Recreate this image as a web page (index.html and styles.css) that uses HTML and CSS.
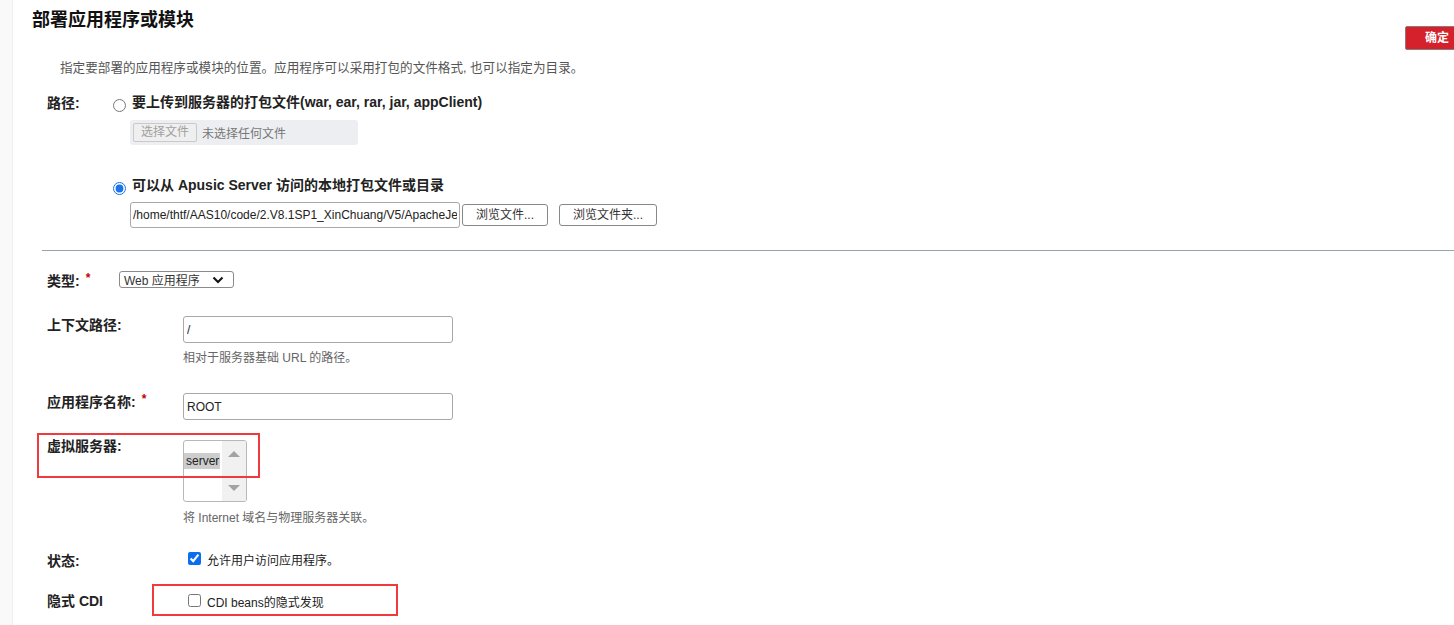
FILE: index.html
```html
<!DOCTYPE html>
<html lang="zh-CN">
<head>
    <title>部署应用程序或模块</title>
    <meta charset="UTF-8">
    <meta name="viewport" content="width=device-width, initial-scale=1.0">
    <link rel="stylesheet" href="styles.css">
</head>
<body>
    <div class="sidebar"></div>
    <div class="main">
        <div class="header">
            <h1 class="titre">部署应用程序或模块</h1>
            <div class="bouton-ok">确定</div>
        </div>
        <p class="desc">指定要部署的应用程序或模块的位置。应用程序可以采用打包的文件格式, 也可以指定为目录。</p>

        <!-- choix du chemin -->
        <div class="chemin">
            <div class="label">路径:</div>
            <div class="choix">
                <label class="radio"><input type="radio" name="src">要上传到服务器的打包文件(war, ear, rar, jar, appClient)</label>
                <div class="fichier">
                    <span class="fichier-btn">选择文件</span>
                    <span class="fichier-nom">未选择任何文件</span>
                </div>
                <label class="radio radio-2"><input type="radio" name="src" checked>可以从 Apusic Server 访问的本地打包文件或目录</label>
                <div class="ligne-path">
                    <input class="path" type="text" value="/home/thtf/AAS10/code/2.V8.1SP1_XinChuang/V5/ApacheJetspeed">
                    <span class="btn">浏览文件...</span>
                    <span class="btn btn-dossier">浏览文件夹...</span>
                </div>
            </div>
        </div>

        <hr class="sep">

        <div class="row row-type">
            <div class="label label-court">类型:<span class="req">*</span></div>
            <div class="select">Web 应用程序
                <svg class="chevron" width="12" height="8" viewBox="0 0 12 8"><polyline points="1.5,1.5 6,6 10.5,1.5" fill="none" stroke="#111" stroke-width="2"/></svg>
            </div>
        </div>

        <div class="row row-ctx">
            <div class="label">上下文路径:</div>
            <div>
                <input class="champ" type="text" value="/">
                <div class="aide">相对于服务器基础 URL 的路径。</div>
            </div>
        </div>

        <div class="row row-nom">
            <div class="label label-haut">应用程序名称:<span class="req">*</span></div>
            <input class="champ" type="text" value="ROOT">
        </div>

        <div class="row row-vs">
            <div class="label label-haut">虚拟服务器:</div>
            <div>
                <div class="listbox">
                    <div class="options"><div class="opt">server</div></div>
                    <div class="scroll">
                        <span class="fleche-haut"></span>
                        <span class="fleche-bas"></span>
                    </div>
                </div>
                <div class="aide aide-vs">将 Internet 域名与物理服务器关联。</div>
            </div>
        </div>

        <div class="row row-etat">
            <div class="label">状态:</div>
            <label class="check"><input type="checkbox" checked>允许用户访问应用程序。</label>
        </div>

        <div class="row row-cdi">
            <div class="label label-cdi">隐式 CDI</div>
            <label class="check"><input type="checkbox">CDI beans的隐式发现</label>
        </div>
    </div>

    <!-- cadres rouges d'annotation -->
    <div class="cadre cadre-vs"></div>
    <div class="cadre cadre-cdi"></div>
</body>
</html>
```

FILE: styles.css
```css
body {
    margin: 0;
    display: flex;
    min-height: 625px;
    overflow: hidden;
    font-family: "Liberation Sans", Arial, "Noto Sans CJK SC", sans-serif;
    color: #222;
    background: #fff;
}

.sidebar {
    width: 12px;
    background-color: #f9f9f9;
    border-right: 1px solid #efefef;
}
.main {
    flex: 1;
    padding-left: 19px;
}

/****** EN-TETE ******/
.header {
    display: flex;
    justify-content: space-between;
    align-items: flex-start;
}
.titre {
    margin: 8px 0 0 0;
    font-size: 18px;
    line-height: 24px;
    font-weight: 700;
    color: #111;
}
.bouton-ok {
    margin-top: 26px;
    margin-right: -12px;
    height: 22px;
    line-height: 22px;
    padding: 0 16px 0 19px;
    background-color: #d4212b;
    border: 1px solid #8a7a7a;
    border-radius: 2px;
    color: #fff;
    font-size: 12px;
    font-weight: 700;
}
.desc {
    margin: 10px 0 0 28px;
    font-size: 12.6px;
    line-height: 16px;
    color: #555;
}

/****** CHEMIN ******/
.chemin {
    display: grid;
    grid-template-columns: 66px auto;
    margin: 16px 0 0 15px;
}
.label {
    font-size: 14px;
    font-weight: 700;
    line-height: 18px;
    color: #222;
}
.chemin > .label {
    padding-top: 2px;
}
.radio {
    display: flex;
    align-items: center;
    font-size: 14px;
    font-weight: 700;
    line-height: 20px;
}
.radio input {
    width: 13px;
    height: 13px;
    margin: 7px 6px 0 0;
    accent-color: #1a73e8;
}
.radio-2 {
    margin-top: 29px;
}
.radio-2 input {
    margin-top: 8px;
}
.fichier {
    display: flex;
    align-items: center;
    width: 222px;
    height: 25px;
    margin: 8px 0 0 17px;
    padding: 0 3px;
    background-color: #eceef1;
    border-radius: 3px;
    font-size: 12px;
}
.fichier-btn {
    height: 17px;
    line-height: 17px;
    padding: 0 7px;
    border: 1px solid #c9c9c9;
    border-radius: 2px;
    background-color: #efefef;
    color: #a0a0a0;
}
.fichier-nom {
    margin-left: 5px;
    color: #777;
}
.ligne-path {
    display: flex;
    align-items: center;
    margin: 7px 0 0 17px;
}
.path {
    box-sizing: border-box;
    width: 330px;
    height: 26px;
    padding: 0 2px;
    border: 1px solid #a8a8a8;
    border-radius: 3px;
    font-family: inherit;
    font-size: 12px;
    color: #222;
}
.btn {
    box-sizing: border-box;
    height: 22px;
    line-height: 20px;
    margin-left: 2px;
    padding: 0 13px;
    border: 1px solid #888;
    border-radius: 3px;
    font-size: 12px;
    color: #333;
    background-color: #fff;
}
.btn-dossier {
    margin-left: 11px;
}

.sep {
    margin: 22px 0 0 10px;
    border: none;
    border-top: 1px solid #94a4ac;
}

/****** FORMULAIRE ******/
.row {
    display: flex;
    align-items: flex-start;
    margin-left: 15px;
}
.row > .label {
    width: 136px;
    flex-shrink: 0;
}
.row > .label-court {
    width: 72px;
}
.label-haut {
    margin-top: -3px;
}
.label-cdi {
    margin-top: -2px;
}
.req {
    color: #c40000;
    font-size: 12px;
    vertical-align: 4px;
    margin-left: 6px;
}
.row-type {
    margin-top: 18px;
    align-items: center;
}
.select {
    display: flex;
    align-items: center;
    box-sizing: border-box;
    width: 115px;
    height: 17px;
    padding: 0 0 0 4px;
    border: 1px solid #8a8a8a;
    border-radius: 3px;
    font-size: 12px;
    color: #333;
}
.chevron {
    margin-left: auto;
    margin-right: 9px;
}
.row-ctx {
    margin-top: 26px;
}
.champ {
    box-sizing: border-box;
    width: 270px;
    height: 27px;
    margin: 0;
    padding: 0 3px;
    border: 1px solid #a8a8a8;
    border-radius: 3px;
    font-family: inherit;
    font-size: 12px;
    color: #222;
}
.aide {
    margin-top: 7px;
    font-size: 12px;
    line-height: 16px;
    color: #666;
}
.row-nom {
    margin-top: 27px;
}
.row-vs {
    margin-top: 20px;
}
.listbox {
    display: flex;
    box-sizing: border-box;
    width: 64px;
    height: 62px;
    border: 1px solid #b8b8b8;
    border-radius: 3px;
    overflow: hidden;
}
.options {
    flex: 1;
    padding-top: 10px;
}
.opt {
    display: inline-block;
    padding: 0 1px 0 2px;
    line-height: 16px;
    font-size: 12px;
    background-color: #cdcdcd;
    color: #222;
}
.scroll {
    width: 24px;
    background-color: #f1f1f1;
    display: flex;
    flex-direction: column;
    align-items: center;
    justify-content: space-between;
    padding: 10px 0 10px 0;
}
.fleche-haut {
    width: 0;
    height: 0;
    border-left: 6px solid transparent;
    border-right: 6px solid transparent;
    border-bottom: 6px solid #a3a3a3;
}
.fleche-bas {
    width: 0;
    height: 0;
    border-left: 6px solid transparent;
    border-right: 6px solid transparent;
    border-top: 6px solid #a3a3a3;
}
.aide-vs {
    margin-top: 8px;
}
.check {
    display: flex;
    align-items: center;
    font-size: 12px;
    line-height: 18px;
    color: #222;
}
.check input {
    width: 13px;
    height: 13px;
    margin: 0 6px 0 5px;
    position: relative;
    top: -3px;
    accent-color: #0b6ef0;
}
.row-etat {
    margin-top: 26px;
}
.row-cdi {
    margin-top: 24px;
}

/****** ANNOTATIONS ******/
.cadre {
    position: absolute;
    border: 2px solid #ef3b3f;
}
.cadre-vs {
    left: 37px;
    top: 433px;
    width: 219px;
    height: 41px;
}
.cadre-cdi {
    left: 152px;
    top: 584px;
    width: 242px;
    height: 28px;
}
```
